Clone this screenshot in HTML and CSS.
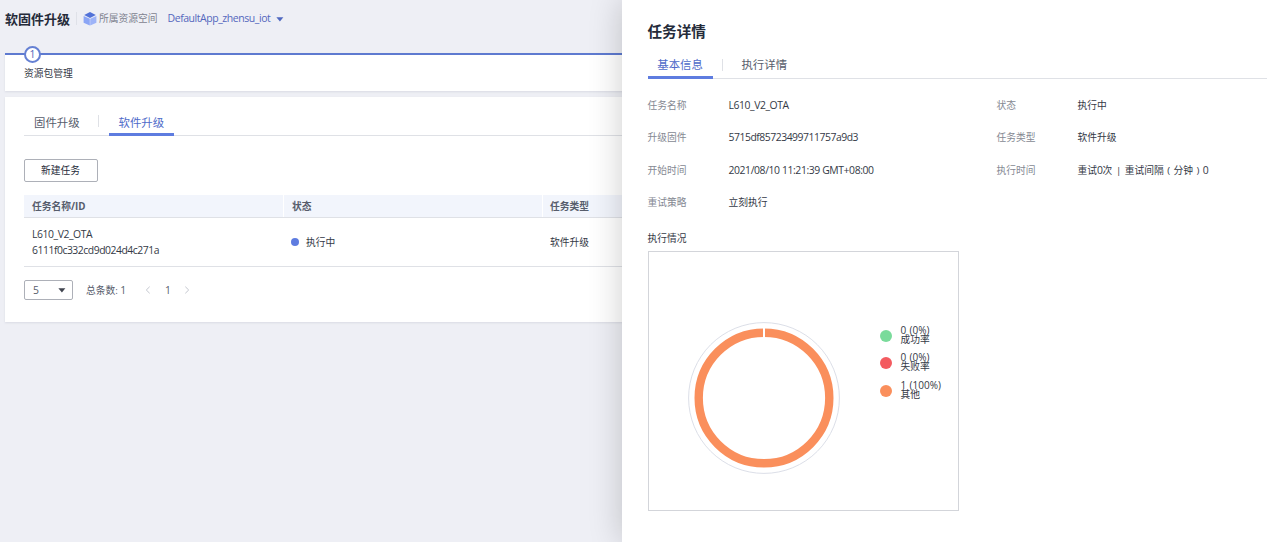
FILE: index.html
```html
<!DOCTYPE html>
<html lang="zh-CN">
<head>
<meta charset="utf-8">
<title>软固件升级</title>
<link rel="stylesheet" href="styles.css">
</head>
<body>
<main class="page">
  <header class="page-head">
    <h1 class="page-title">软固件升级</h1>
    <span class="head-divider"></span>
    <svg class="cube" width="14" height="14" viewBox="0 0 14 14">
      <path d="M7 0.1 12.8 2.9 7 5.9 1.2 2.9Z" fill="#5272d8"/>
      <path d="M0.6 4 6.8 6.8V13.6L0.6 10.7Z" fill="#8ba5f5"/>
      <path d="M13.4 4 7.2 6.8V13.6L13.4 10.7Z" fill="#9db3f8"/>
    </svg>
    <span class="space-label">所属资源空间</span>
    <span class="space-name">DefaultApp_zhensu_iot</span>
    <svg class="space-caret" width="8" height="5" viewBox="0 0 8 5"><path d="M0.4 0.3H7.4L3.9 4.6Z" fill="#5068c0"/></svg>
  </header>
  <section class="step-card">
    <span class="step-number">1</span>
    <span class="step-label">资源包管理</span>
  </section>
  <section class="list-card">
    <nav class="tabs">
      <span class="tab">固件升级</span>
      <span class="tab-divider"></span>
      <span class="tab active">软件升级</span>
    </nav>
    <button class="new-task">新建任务</button>
    <div class="table">
      <div class="row table-head"><span>任务名称/ID</span><span>状态</span><span>任务类型</span></div>
      <div class="row table-body">
        <div><div class="task-name">L610_V2_OTA</div><div class="task-id">6111f0c332cd9d024d4c271a</div></div>
        <div class="status"><i class="status-dot"></i>执行中</div>
        <div>软件升级</div>
      </div>
    </div>
    <footer class="pager">
      <div class="page-size"><span>5</span><svg width="8" height="5" viewBox="0 0 8 5"><path d="M0.4 0.3H7.4L3.9 4.6Z" fill="#40444f"/></svg></div>
      <span class="total">总条数: <span class="num">1</span></span>
      <svg class="prev" width="6" height="8" viewBox="0 0 6 8"><path d="M4.7 0.7 1.3 4 4.7 7.3" fill="none" stroke="#c3c6ce"/></svg>
      <span class="page-no num">1</span>
      <svg class="next" width="6" height="8" viewBox="0 0 6 8"><path d="M1.3 0.7 4.7 4 1.3 7.3" fill="none" stroke="#c3c6ce"/></svg>
    </footer>
  </section>
</main>
<aside class="drawer">
  <h2 class="drawer-title">任务详情</h2>
  <nav class="tabs drawer-tabs">
    <span class="tab active">基本信息</span>
    <span class="tab-divider"></span>
    <span class="tab">执行详情</span>
  </nav>
  <div class="details">
    <span class="key">任务名称</span><span class="val name">L610_V2_OTA</span>
    <span class="key">状态</span><span class="val">执行中</span>
    <span class="key">升级固件</span><span class="val id">5715df85723499711757a9d3</span>
    <span class="key">任务类型</span><span class="val">软件升级</span>
    <span class="key">开始时间</span><span class="val time">2021/08/10 11:21:39 GMT+08:00</span>
    <span class="key">执行时间</span><span class="val">重试<span class="num">0</span>次<span class="bar">|</span>重试间隔<span class="paren">(</span>分钟<span class="paren">)</span><span class="num">0</span></span>
    <span class="key">重试策略</span><span class="val">立刻执行</span>
  </div>
  <div class="chart-title">执行情况</div>
  <div class="chart">
    <svg class="donut" width="154" height="154" viewBox="-77 -77 154 154">
      <circle r="75.4" fill="none" stroke="#dcdfe8"/>
      <circle r="65.3" fill="none" stroke="#fa8f5c" stroke-width="8.4"/>
      <path d="M0-70V-60" stroke="#fff" stroke-width="2"/>
    </svg>
    <ul class="legend">
      <li><i class="dot success"></i><div><div class="count">0 (0%)</div><div class="kind">成功率</div></div></li>
      <li><i class="dot failure"></i><div><div class="count">0 (0%)</div><div class="kind">失败率</div></div></li>
      <li><i class="dot other"></i><div><div class="count">1 (100%)</div><div class="kind">其他</div></div></li>
    </ul>
  </div>
</aside>
</body>
</html>
```
FILE: styles.css
```css
* { box-sizing: border-box; }
body {
  position: relative;
  width: 1267px;
  height: 542px;
  margin: 0;
  overflow: hidden;
  background: #eeeff5;
  color: #343946;
  font: 9.75px/16px "Open Sans", "Noto Sans CJK SC", sans-serif;
}
span, div { white-space: nowrap; }
svg { display: block; flex: none; }
.num { font-size: 10.4px; letter-spacing: -0.4px; }

.page { padding-left: 5px; }
.page-head { display: flex; align-items: center; height: 37px; }
.page-title { margin: 0; font-size: 13px; font-weight: 700; line-height: 20px; color: #252b3a; }
.head-divider { width: 1px; height: 13px; margin: 0 6px; background: #dfe1e8; }
.space-label { margin-left: 2px; color: #7f8390; }
.space-name { margin: -1px 0 0 10px; color: #5467bd; font-size: 10.5px; letter-spacing: -0.45px; }
.space-caret { margin: 1px 0 0 6px; }

.step-card {
  display: flex;
  flex-direction: column;
  align-items: flex-start;
  height: 38px;
  margin-top: 16px;
  padding-left: 19px;
  border-top: 2px solid #5e7ad0;
  background: #fff;
  box-shadow: 0 1px 2px #d9dbe3;
}
.step-number {
  width: 17px;
  height: 17px;
  margin-top: -9px;
  border: 2px solid #6580d3;
  border-radius: 50%;
  background: #fff;
  color: #5064b8;
  font-size: 10.4px;
  line-height: 13px;
  text-align: center;
}
.step-label { margin-top: 3px; }

.list-card {
  height: 225px;
  margin-top: 6px;
  padding: 12px 0 0 19px;
  background: #fff;
  box-shadow: 0 1px 2px #d9dbe3;
}
.tabs { display: flex; height: 27px; border-bottom: 1px solid #dfe1e6; font-size: 11.4px; }
.tab { height: 27px; padding: 0 10px; line-height: 27px; color: #575d6c; }
.tab.active { border-bottom: 3px solid #5e7ce0; color: #4f6bc9; }
.tab-divider { width: 1px; height: 12px; margin: 7px 9px 0; background: #dfe1e6; }
.list-card .tab-divider { margin: 6px 10px 0 8px; }
.new-task {
  display: block;
  width: 74px;
  height: 23px;
  margin-top: 23px;
  padding: 1px 1px 0 0;
  border: 1px solid #adb0b8;
  border-radius: 2px;
  background: #fff;
  color: #252b3a;
  font: inherit;
}
.table { margin-top: 13px; }
.row { display: grid; grid-template-columns: 259px 259px 1fr; align-items: center; }
.table-head { height: 23px; background: #f2f5fc; border-bottom: 1px solid #dfe1e6; font-weight: 700; color: #575d6c; }
.row > * { padding-left: 8px; }
.table-head span { height: 22px; line-height: 23px; }
.table-head span + span { border-left: 1px solid #fff; }
.table-head span:last-child { padding-left: 7px; }
.table-body { height: 49px; padding-top: 1px; border-bottom: 1px solid #dfe1e6; }
.task-name, .name { font-size: 10.4px; letter-spacing: -0.42px; }
.task-id, .id { font-size: 10.4px; letter-spacing: -0.47px; }
.task-name, .task-id { margin-top: -1px; margin-bottom: 1px; }
.status { display: flex; align-items: center; }
.status-dot { width: 8px; height: 8px; margin: -1px 7px 0 0; border-radius: 50%; background: #5e7ce0; }
.pager { display: flex; align-items: center; height: 20px; margin-top: 13px; color: #575d6c; }
.page-size {
  display: flex;
  align-items: center;
  justify-content: space-between;
  width: 49px;
  height: 20px;
  padding: 0 6px 0 8px;
  border: 1px solid #adb0b8;
  border-radius: 2px;
  font-size: 10.4px;
}
.total { margin-left: 13px; }
.prev { margin-left: 19px; }
.page-no { margin-left: 14px; }
.next { margin-left: 14px; }

.drawer {
  position: absolute;
  top: 0;
  right: 0;
  width: 645px;
  height: 542px;
  padding: 21px 0 0 25.5px;
  background: #fff;
  box-shadow: 0 0 32px rgba(0, 0, 0, 0.2);
}
.drawer-title { margin: 0; font-size: 14.6px; line-height: 20px; color: #252b3a; }
.drawer-tabs { height: 27px; margin-top: 10.5px; }
.drawer-tabs .tab { padding: 0 9.8px; line-height: 26px; }
.details {
  display: grid;
  grid-template-columns: 81px 268px 81px 1fr;
  grid-auto-rows: 32.5px;
  align-items: center;
  margin-top: 11px;
}
.key { color: #858993; }
.time { font-size: 10.4px; letter-spacing: -0.4px; }
.details .name, .details .id, .details .time { padding-bottom: 2px; }
.bar { margin: 0 3.6px; }
.paren { display: inline-block; width: 9.75px; text-align: center; }
.chart-title { margin-top: 11px; }
.chart {
  display: flex;
  width: 311px;
  height: 260px;
  margin-top: 4.5px;
  border: 1px solid #d3d5da;
}
.donut { margin: 68.5px 0 0 38.5px; }
.legend { margin: 73.5px 0 0 39px; padding: 0; list-style: none; }
.legend li { display: flex; align-items: center; gap: 8.5px; height: 19px; margin-bottom: 8.5px; }
.count { font-size: 10px; line-height: 9px; word-spacing: 0.8px; }
.kind { line-height: 10px; }
.dot { width: 12px; height: 12px; margin-top: 1px; border-radius: 50%; }
.success { background: #7adb9b; }
.failure { background: #f35b60; }
.other { background: #fa8f5c; }
```
